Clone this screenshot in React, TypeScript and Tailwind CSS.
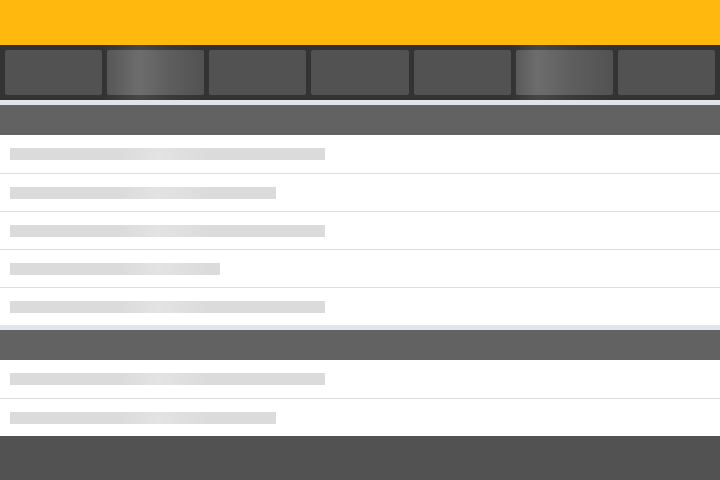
import React from 'react';

const tabs = [
  { shimmer: '' },
  { shimmer: 'peak31' },
  { shimmer: '' },
  { shimmer: '' },
  { shimmer: '' },
  { shimmer: 'peak21' },
  { shimmer: '' },
];

const sections = [
  { rows: [315, 266, 315, 210, 315] },
  { rows: [315, 266] },
];

function Tab({ shimmer }: { shimmer: string }) {
  // wrapper carries the glow that spills onto the dark strip
  const wrap =
    shimmer === 'peak31'
      ? 'bg-[linear-gradient(90deg,#343434_0%,#474747_33%,#3a3a3a_65%,#333333_95%)]'
      : shimmer === 'peak21'
      ? 'bg-[linear-gradient(90deg,#343434_0%,#474747_24%,#3a3a3a_60%,#333333_92%)]'
      : '';
  const tile =
    shimmer === 'peak31'
      ? 'bg-[linear-gradient(90deg,#575757_0%,#6d6d6d_33%,#5f5f5f_62%,#525252_100%)]'
      : shimmer === 'peak21'
      ? 'bg-[linear-gradient(90deg,#5a5a5a_0%,#6d6d6d_22%,#5f5f5f_55%,#525252_100%)]'
      : 'bg-[#525252]';
  return (
    <div className={`flex-1 px-[2.5px] py-[5px] ${wrap}`}>
      <div className={`h-full rounded-[2px] ${tile}`} />
    </div>
  );
}

function Row({ width, first }: { width: number; first: boolean }) {
  return (
    <div className={`h-[38px] bg-white pl-[10px] pt-[13px] ${first ? '' : 'border-t border-[#dedede]'}`}>
      <div
        className="h-[12px] bg-[linear-gradient(90deg,#dbdbdb_110px,#e3e3e3_148px,#dbdbdb_200px)]"
        style={{ width }}
      />
    </div>
  );
}

export default function App() {
  return (
    <div className="w-[720px] h-[480px] overflow-hidden flex flex-col bg-[#525252]">
      {/* top bar */}
      <div className="h-[45px] bg-[#ffb80e] shrink-0" />

      {/* tab strip */}
      <div className="h-[55px] bg-[#333333] flex px-[2.5px] shrink-0">
        {tabs.map((t, i) => (
          <Tab key={i} shimmer={t.shimmer} />
        ))}
      </div>

      {/* list sections */}
      {sections.map((s, i) => (
        <div key={i} className="shrink-0">
          <div className="h-[5px] bg-[#e1e5e9]" />
          <div className="h-[30px] bg-[#626262]" />
          {s.rows.map((w, j) => (
            <Row key={j} width={w} first={j === 0} />
          ))}
        </div>
      ))}

      {/* footer */}
      <div className="flex-1 bg-[#525252]" />
    </div>
  );
}
